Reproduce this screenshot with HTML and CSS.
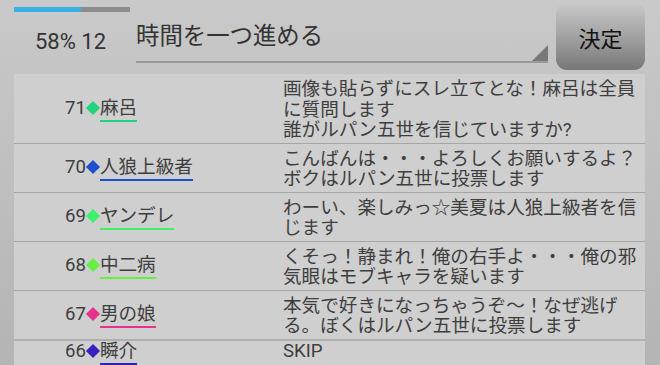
FILE: index.html
```html
<!DOCTYPE html>
<html lang="ja">
<head>
  <meta charset="UTF-8">
  <meta name="viewport" content="width=device-width, initial-scale=1.0">
  <title>ログ</title>
  <link rel="stylesheet" href="styles.css">
</head>
<body>
  <div class="app">
    <header class="top">
      <div class="status">
        <div class="progress"><div class="progress-fill" style="width: 58%"></div></div>
        <div class="count">58% 12</div>
      </div>
      <div class="field">
        <span class="field-text">時間を一つ進める</span>
        <span class="field-corner"></span>
      </div>
      <button class="decide" type="button">決定</button>
    </header>

    <div class="log">
      <div class="row">
        <div class="who"><span class="who-line">71<span class="mark c-maro"></span><span class="name c-maro">麻呂</span></span></div>
        <div class="msg">画像も貼らずにスレ立てとな！麻呂は全員に質問します<br>誰がルパン五世を信じていますか?</div>
      </div>
      <div class="row">
        <div class="who"><span class="who-line">70<span class="mark c-jinro"></span><span class="name c-jinro">人狼上級者</span></span></div>
        <div class="msg">こんばんは・・・よろしくお願いするよ？<br>ボクはルパン五世に投票します</div>
      </div>
      <div class="row">
        <div class="who"><span class="who-line">69<span class="mark c-yandere"></span><span class="name c-yandere">ヤンデレ</span></span></div>
        <div class="msg">わーい、楽しみっ☆美夏は人狼上級者を信じます</div>
      </div>
      <div class="row">
        <div class="who"><span class="who-line">68<span class="mark c-chuni"></span><span class="name c-chuni">中二病</span></span></div>
        <div class="msg">くそっ！静まれ！俺の右手よ・・・俺の邪気眼はモブキャラを疑います</div>
      </div>
      <div class="row row-thick">
        <div class="who"><span class="who-line">67<span class="mark c-otoko"></span><span class="name c-otoko">男の娘</span></span></div>
        <div class="msg">本気で好きになっちゃうぞ～！なぜ逃げる。ぼくはルパン五世に投票します</div>
      </div>
      <div class="row row-short">
        <div class="who"><span class="who-line">66<span class="mark c-shun"></span><span class="name c-shun">瞬介</span></span></div>
        <div class="msg">SKIP</div>
      </div>
    </div>
  </div>
</body>
</html>
```

FILE: styles.css
```css
* {
  box-sizing: border-box;
  margin: 0;
  padding: 0;
}

body {
  font-family: Roboto, "Noto Sans CJK JP", sans-serif;
  background: linear-gradient(to bottom, #c9c9c9 0%, #b4b4b4 100%);
  color: #3e3e3e;
  height: 365px;
  overflow: hidden;
}

.app {
  width: 645px;
  padding-left: 14px;
}

/* header */
.top {
  display: flex;
  height: 74px;
}

.status {
  width: 122px;
  padding-top: 7px;
}

.progress {
  width: 116px;
  height: 5px;
  background: #8c8c8c;
}

.progress-fill {
  height: 100%;
  background: #39b0e2;
}

.count {
  padding: 17px 0 0 21px;
  font-size: 22px;
  color: #333;
}

.field {
  position: relative;
  width: 412px;
  height: 63px;
  border-bottom: 2px solid #9a9a9a;
  padding-top: 17px;
}

.field-text {
  font-size: 23.4px;
  color: #333;
}

.field-corner {
  position: absolute;
  right: 0;
  bottom: 0;
  width: 0;
  height: 0;
  border-left: 16px solid transparent;
  border-bottom: 16px solid #787878;
}

.decide {
  margin: 3px 0 0 8px;
  width: 89px;
  height: 67px;
  border: none;
  border-radius: 11px;
  background: linear-gradient(to bottom, #c8c8c8 0%, #a2a2a2 50%, #777 100%);
  color: #111;
  font-family: inherit;
  font-size: 22px;
}

/* log */
.log {
  background: #cfcfcf;
  height: 291px;
}

.row {
  display: flex;
  border-bottom: 1px solid #a6a6a6;
  padding: 5px 0 2px;
  font-size: 18.6px;
  line-height: 20.5px;
}

.row-thick {
  border-bottom: 2px solid #b0b0b0;
}

.row-short {
  padding: 0;
}

.who {
  width: 269px;
  padding-left: 51px;
  display: flex;
  align-items: center;
}

.who-line {
  white-space: nowrap;
}

.mark {
  display: inline-block;
  width: 10px;
  height: 10px;
  margin: 0 2px;
  vertical-align: middle;
  transform: translateY(-1px) rotate(45deg);
}

.name {
  display: inline-block;
  border-bottom: 2px solid;
  padding-bottom: 2px;
  color: #3e3e3e;
}

.msg {
  flex: 1;
  padding-right: 4px;
}

.mark.c-maro { background: #1fd47c; }
.name.c-maro { border-color: #1fd47c; }
.mark.c-jinro { background: #1f4fcf; }
.name.c-jinro { border-color: #1f4fcf; }
.mark.c-yandere { background: #3ef06c; }
.name.c-yandere { border-color: #3ef06c; }
.mark.c-chuni { background: #66ee44; }
.name.c-chuni { border-color: #66ee44; }
.mark.c-otoko { background: #e8308f; }
.name.c-otoko { border-color: #e8308f; }
.mark.c-shun { background: #3322bb; }
.name.c-shun { border-color: #3322bb; }
```
